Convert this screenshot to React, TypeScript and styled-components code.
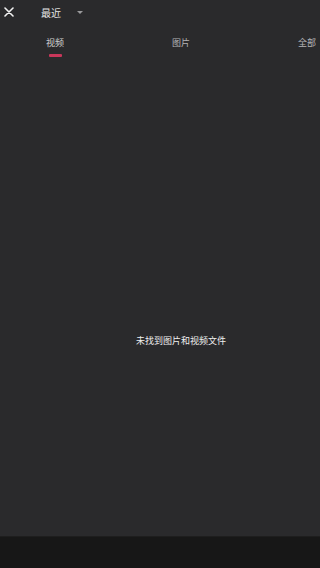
import styled, { createGlobalStyle } from 'styled-components';

const GlobalStyle = createGlobalStyle`
  html, body {
    margin: 0;
    padding: 0;
    background: #2a2a2c;
  }
  body {
    font-family: "Noto Sans CJK SC", "Noto Sans", sans-serif;
  }
`;

const Screen = styled.div`
  width: 320px;
  height: 568px;
  display: flex;
  flex-direction: column;
  background: #2a2a2c;
  overflow: hidden;
`;

const Header = styled.div`
  height: 26px;
  display: flex;
  align-items: center;
  padding-left: 4px;
`;

const CloseButton = styled.div`
  width: 10px;
  height: 10px;
  display: flex;
  margin-top: -2px;
  svg {
    width: 10px;
    height: 10px;
  }
`;

const AlbumTitle = styled.span`
  margin-left: 27px;
  font-size: 10px;
  line-height: 10px;
  color: #e8e8e8;
  margin-top: -1px;
`;

const Caret = styled.span`
  margin-left: 16px;
  width: 0;
  height: 0;
  border-left: 3px solid transparent;
  border-right: 3px solid transparent;
  border-top: 3px solid #9a9a9c;
  margin-top: -2px;
`;

const TabBar = styled.div`
  height: 34px;
  display: flex;
  margin-left: -8px;
`;

const Tab = styled.div<{ $active?: boolean }>`
  flex: 0 0 126px;
  display: flex;
  flex-direction: column;
  align-items: center;
  padding-top: 12px;
  font-size: 9px;
  line-height: 10px;
  color: ${(p) => (p.$active ? '#d0d0d0' : '#b4b4b6')};

  &::after {
    content: '';
    width: 13px;
    height: 3px;
    margin-top: 6px;
    border-radius: 1px;
    background: ${(p) => (p.$active ? '#c8375a' : 'transparent')};
  }
`;

const Content = styled.div`
  flex: 1;
  display: flex;
  align-items: center;
  justify-content: center;
  padding-left: 42px;
  padding-top: 86px;
`;

const EmptyText = styled.span`
  font-size: 9px;
  line-height: 10px;
  color: #f0f0f0;
`;

const BottomBar = styled.div`
  height: 31px;
  background: #171717;
  border-top: 1px solid #1e1e1e;
`;

export default function App() {
  return (
    <>
      <GlobalStyle />
      <Screen>
        <Header>
          <CloseButton>
            <svg viewBox="0 0 10 10">
              <path d="M1 1 L9 9 M9 1 L1 9" stroke="#f2f2f2" strokeWidth="1.6" strokeLinecap="round" />
            </svg>
          </CloseButton>
          <AlbumTitle>最近</AlbumTitle>
          <Caret />
        </Header>
        <TabBar>
          <Tab $active>视频</Tab>
          <Tab>图片</Tab>
          <Tab>全部</Tab>
        </TabBar>
        <Content>
          <EmptyText>未找到图片和视频文件</EmptyText>
        </Content>
        <BottomBar />
      </Screen>
    </>
  );
}
